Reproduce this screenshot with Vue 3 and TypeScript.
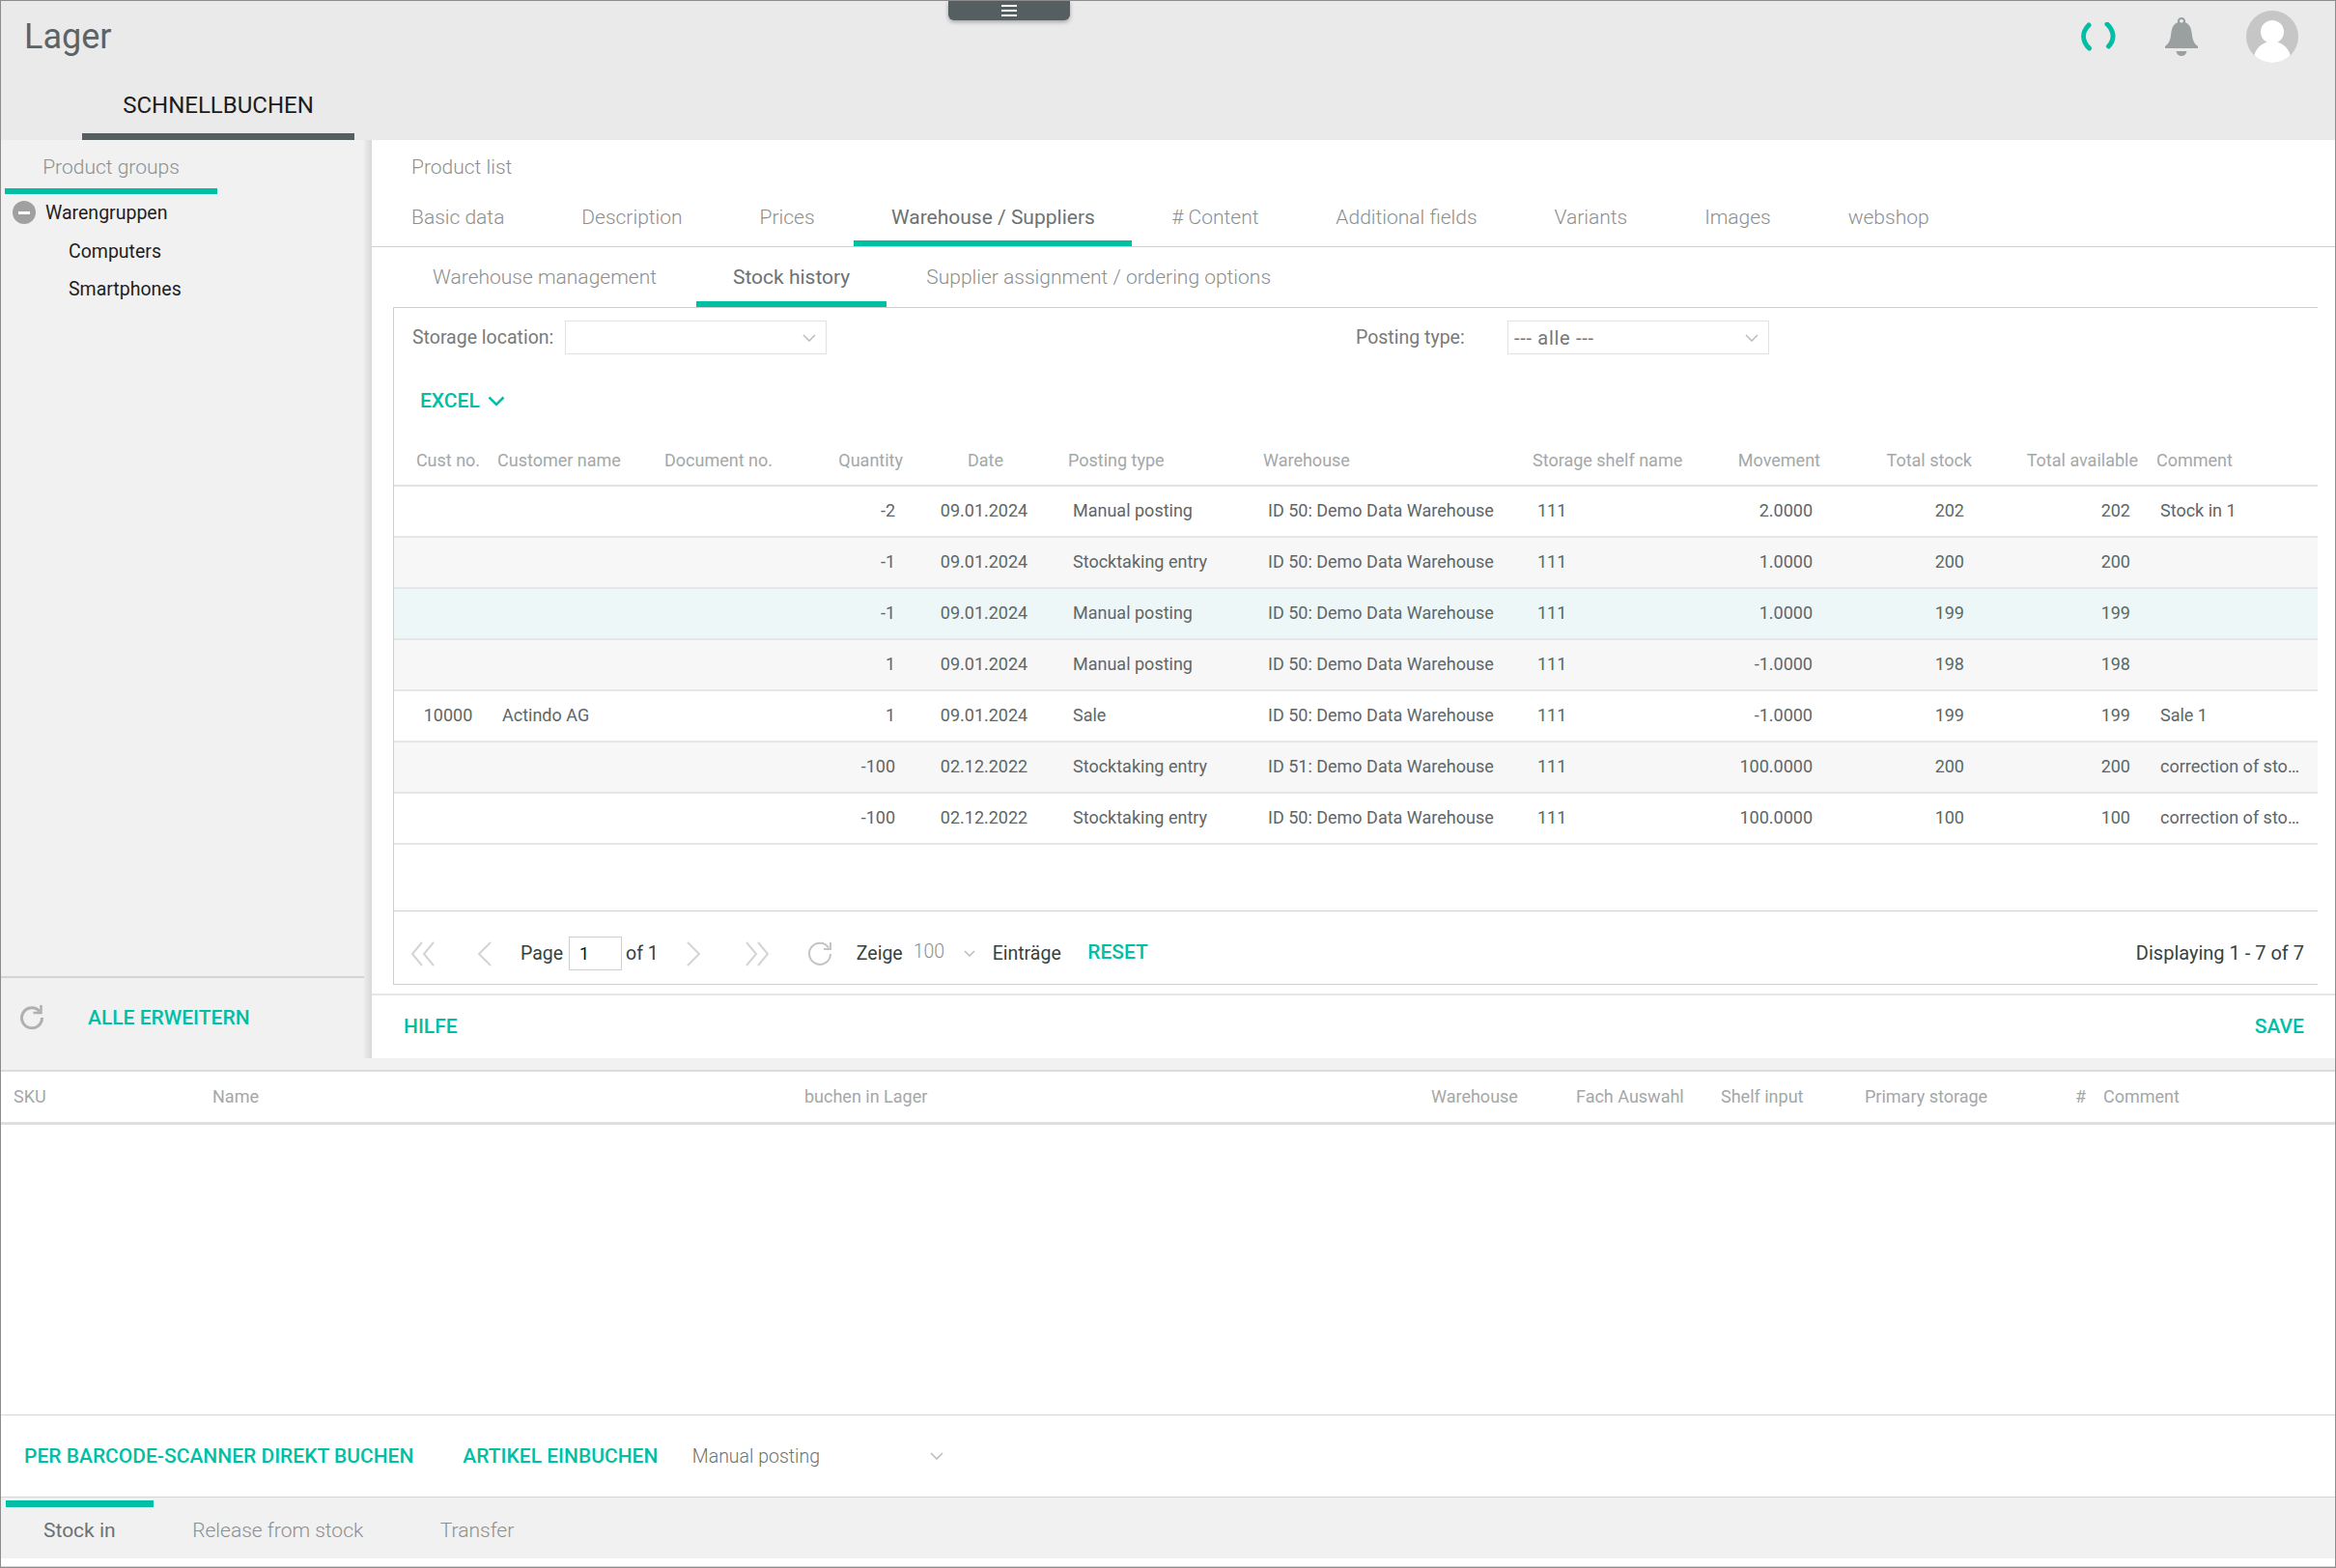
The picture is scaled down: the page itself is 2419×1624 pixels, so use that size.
<template>
  <div class="frame">
    <header class="top">
      <div class="handle">
        <span></span><span></span><span></span>
      </div>
      <div class="top-row">
        <h1 class="title">Lager</h1>
        <div class="top-icons">
          <svg class="spinner" width="36" height="30" viewBox="0 0 36 30">
            <path d="M8 3 C1 10 0.5 19 8.500 27" fill="none" stroke="#00bfa5" stroke-width="5" stroke-linecap="round" />
            <path d="M27 2 C34.500 9 35 18 28.500 25" fill="none" stroke="#00bfa5" stroke-width="5" stroke-linecap="round" />
          </svg>
          <svg class="bell" width="36" height="42" viewBox="0 0 36 42">
            <path fill="#9aa0a0" fill-rule="evenodd" d="M18 1c-2.300 0-4 1.700-4 3.800v1.500C9.500 8.200 8 12 7.300 17.500 6.500 24 5.500 28 1 31v2h34v-2c-4.500-3-5.500-7-6.300-13.500C28 12 26.500 8.200 22 6.300V4.800C22 2.700 20.300 1 18 1zm0 2c1.100 0 2 .8 2 1.800s-.9 1.800-2 1.800-2-.8-2-1.800.9-1.800 2-1.800z" />
            <path fill="#9aa0a0" d="M12.500 36h11c-.4 3-2.800 5-5.500 5s-5.100-2-5.500-5z" />
          </svg>
          <svg class="avatar" width="54" height="54" viewBox="0 0 54 54">
            <defs>
              <clipPath id="avatar-clip"><circle cx="27" cy="27" r="27" /></clipPath>
            </defs>
            <circle cx="27" cy="27" r="27" fill="#c6c6c6" />
            <g clip-path="url(#avatar-clip)" fill="#fff">
              <circle cx="27" cy="22" r="12" />
              <ellipse cx="27" cy="50" rx="19" ry="18" />
            </g>
          </svg>
        </div>
      </div>
      <nav class="top-tabs">
        <a class="top-tab">SCHNELLBUCHEN</a>
      </nav>
    </header>

    <section class="main">
      <aside class="side">
        <div class="side-tab">Product groups</div>
        <ul class="tree">
          <li class="tree-root">
            <span class="tree-toggle"></span>
            Warengruppen
          </li>
          <li class="tree-leaf">Computers</li>
          <li class="tree-leaf">Smartphones</li>
        </ul>
        <div class="side-foot">
          <svg width="28" height="28" viewBox="0 0 28 28" fill="none" stroke="#b0b0b0" stroke-width="3">
            <path d="M22 7.500A10.500 10.500 0 1 0 24.500 14" />
            <path d="M23.500 1v8h-8" stroke-width="2.500" />
          </svg>
          <a class="link expand">ALLE ERWEITERN</a>
        </div>
      </aside>
      <div class="splitter"></div>

      <div class="content">
        <div class="crumb">Product list</div>
        <nav class="tabs">
          <a v-for="t in mainTabs" :key="t" class="tab" :class="{ active: t === 'Warehouse / Suppliers' }">{{ t }}</a>
        </nav>
        <nav class="subtabs">
          <a v-for="t in subTabs" :key="t" class="subtab" :class="{ active: t === 'Stock history' }">{{ t }}</a>
        </nav>

        <div class="box">
          <div class="filters">
            <label class="f-label first">Storage location:</label>
            <div class="select s1">
              <svg class="chev" width="14" height="8" viewBox="0 0 14 8"><path d="M1 1l6 6 6-6" fill="none" stroke="#bbb" stroke-width="1.500" /></svg>
            </div>
            <label class="f-label second">Posting type:</label>
            <div class="select s2">
              <span>--- alle ---</span>
              <svg class="chev" width="14" height="8" viewBox="0 0 14 8"><path d="M1 1l6 6 6-6" fill="none" stroke="#bbb" stroke-width="1.500" /></svg>
            </div>
          </div>
          <div class="excel">
            <a class="link">EXCEL</a>
            <svg width="18" height="11" viewBox="0 0 18 11"><path d="M1.500 1.500L9 9l7.500-7.500" fill="none" stroke="#00bfa5" stroke-width="2.500" /></svg>
          </div>

          <table class="grid">
            <colgroup>
              <col v-for="w in colWidths" :key="w.id" :style="{ width: w.px + 'px' }" />
            </colgroup>
            <thead>
              <tr>
                <th v-for="c in columns" :key="c.label" :class="c.cls">{{ c.label }}</th>
              </tr>
            </thead>
            <tbody>
              <tr v-for="(r, i) in rows" :key="i" :class="{ alt: i % 2 === 1 && i !== 2, hover: i === 2 }">
                <td v-for="(v, j) in r" :key="j" :class="columns[j].cls">{{ v }}</td>
              </tr>
            </tbody>
          </table>

          <div class="pager">
            <svg class="p-first" width="26" height="26" viewBox="0 0 26 26" fill="none" stroke="#d4d4d4" stroke-width="2"><path d="M12 1L2 13l10 12M24 1L14 13l10 12" /></svg>
            <svg class="p-prev" width="16" height="26" viewBox="0 0 16 26" fill="none" stroke="#d4d4d4" stroke-width="2"><path d="M14 1L2 13l12 12" /></svg>
            <span class="p-text p-page">Page</span>
            <input class="p-input" value="1" />
            <span class="p-text p-of">of 1</span>
            <svg class="p-next" width="16" height="26" viewBox="0 0 16 26" fill="none" stroke="#d4d4d4" stroke-width="2"><path d="M2 1l12 12L2 25" /></svg>
            <svg class="p-last" width="26" height="26" viewBox="0 0 26 26" fill="none" stroke="#d4d4d4" stroke-width="2"><path d="M2 1l10 12L2 25M14 1l10 12-10 12" /></svg>
            <svg class="p-refresh" width="28" height="28" viewBox="0 0 28 28" fill="none" stroke="#c4c4c4" stroke-width="2">
              <path d="M23 7.500A11 11 0 1 0 25 14" />
              <path d="M25 2v7h-7" />
            </svg>
            <span class="p-text p-zeige">Zeige</span>
            <span class="p-size">100</span>
            <svg class="p-chev" width="12" height="8" viewBox="0 0 12 8"><path d="M1 1l5 5 5-5" fill="none" stroke="#bbb" stroke-width="1.500" /></svg>
            <span class="p-text p-entries">Einträge</span>
            <a class="link p-reset">RESET</a>
            <span class="p-text p-display">Displaying 1 - 7 of 7</span>
          </div>
        </div>

        <div class="foot">
          <a class="link">HILFE</a>
          <a class="link">SAVE</a>
        </div>
      </div>
    </section>

    <section class="lower">
      <div class="band"></div>
      <div class="lower-head">
        <span v-for="h in lowerCols" :key="h.label" class="lh" :style="{ width: h.px + 'px' }">{{ h.label }}</span>
      </div>
      <div class="lower-body"></div>
      <div class="actions">
        <a class="link barcode">PER BARCODE-SCANNER DIREKT BUCHEN</a>
        <a class="link book">ARTIKEL EINBUCHEN</a>
        <span class="a-type">Manual posting</span>
        <svg width="14" height="8" viewBox="0 0 14 8"><path d="M1 1l6 6 6-6" fill="none" stroke="#bbb" stroke-width="1.500" /></svg>
      </div>
      <nav class="bottom-tabs">
        <a v-for="t in bottomTabs" :key="t" class="b-tab" :class="{ active: t === 'Stock in' }">{{ t }}</a>
      </nav>
    </section>
  </div>
</template>

<script setup lang="ts">
const mainTabs = ['Basic data', 'Description', 'Prices', 'Warehouse / Suppliers', '# Content', 'Additional fields', 'Variants', 'Images', 'webshop']
const subTabs = ['Warehouse management', 'Stock history', 'Supplier assignment / ordering options']
const bottomTabs = ['Stock in', 'Release from stock', 'Transfer']

const columns = [
  { label: 'Cust no.', cls: 'c-cust' },
  { label: 'Customer name', cls: 'c-left' },
  { label: 'Document no.', cls: 'c-left' },
  { label: 'Quantity', cls: 'c-right' },
  { label: 'Date', cls: 'c-center' },
  { label: 'Posting type', cls: 'c-left' },
  { label: 'Warehouse', cls: 'c-left' },
  { label: 'Storage shelf name', cls: 'c-left' },
  { label: 'Movement', cls: 'c-right' },
  { label: 'Total stock', cls: 'c-right' },
  { label: 'Total available', cls: 'c-right' },
  { label: 'Comment', cls: 'c-comment' },
]

const colWidths = [102, 173, 152, 105, 161, 202, 279, 188, 120, 157, 172, 181].map((px, id) => ({ id, px }))

const wh50 = 'ID 50: Demo Data Warehouse'
const wh51 = 'ID 51: Demo Data Warehouse'
const fix = 'correction of sto…'
const rows = [
  ['', '', '', '-2', '09.01.2024', 'Manual posting', wh50, '111', '2.0000', '202', '202', 'Stock in 1'],
  ['', '', '', '-1', '09.01.2024', 'Stocktaking entry', wh50, '111', '1.0000', '200', '200', ''],
  ['', '', '', '-1', '09.01.2024', 'Manual posting', wh50, '111', '1.0000', '199', '199', ''],
  ['', '', '', '1', '09.01.2024', 'Manual posting', wh50, '111', '-1.0000', '198', '198', ''],
  ['10000', 'Actindo AG', '', '1', '09.01.2024', 'Sale', wh50, '111', '-1.0000', '199', '199', 'Sale 1'],
  ['', '', '', '-100', '02.12.2022', 'Stocktaking entry', wh51, '111', '100.0000', '200', '200', fix],
  ['', '', '', '-100', '02.12.2022', 'Stocktaking entry', wh50, '111', '100.0000', '100', '100', fix],
]

const lowerCols = [
  { label: 'SKU', px: 206 },
  { label: 'Name', px: 613 },
  { label: 'buchen in Lager', px: 649 },
  { label: 'Warehouse', px: 150 },
  { label: 'Fach Auswahl', px: 150 },
  { label: 'Shelf input', px: 149 },
  { label: 'Primary storage', px: 218 },
  { label: '#', px: 29 },
  { label: 'Comment', px: 180 },
]
</script>

<style>
html, body {
  margin: 0;
  padding: 0;
  background: #fff;
}
</style>

<style scoped>
.frame {
  width: 2419px;
  height: 1624px;
  box-sizing: border-box;
  border: 1px solid #8c8c8c;
  display: flex;
  flex-direction: column;
  position: relative;
  overflow: hidden;
  background: #fff;
  font-family: Roboto, "Liberation Sans", sans-serif;
  font-size: 18px;
  color: #5e6668;
}
a { cursor: pointer; }

.top {
  height: 144px;
  background: #eaeaea;
  display: flex;
  flex-direction: column;
  flex: none;
}
.handle {
  position: absolute;
  left: 981px;
  top: 0;
  width: 126px;
  height: 20px;
  box-sizing: border-box;
  padding-top: 4px;
  background: #555e60;
  border-radius: 0 0 6px 6px;
  box-shadow: 0 2px 4px rgba(0, 0, 0, 0.3);
  display: flex;
  flex-direction: column;
  align-items: center;
  gap: 3px;
}
.handle span {
  width: 16px;
  height: 2px;
  background: #fff;
}
.top-row {
  height: 77px;
  flex: none;
  display: flex;
  align-items: center;
  justify-content: space-between;
  padding: 0 25px 0 24px;
}
.title {
  margin: 0 0 3px;
  font-size: 36px;
  font-weight: 400;
  color: #5a6468;
  line-height: 72px;
}
.top-icons {
  display: flex;
  align-items: center;
  margin-top: -3px;
  margin-right: 13px;
}
.spinner { margin-right: 50px; }
.bell { margin-right: 49.5px; }
.top-tabs {
  padding-left: 84px;
  display: flex;
}
.top-tab {
  width: 282px;
  height: 67px;
  box-sizing: border-box;
  line-height: 62px;
  text-align: center;
  border-bottom: 7px solid #555e60;
  color: #1c1c1c;
  font-size: 24px;
}

.main {
  height: 951px;
  flex: none;
  display: flex;
}
.side {
  width: 376px;
  flex: none;
  background: #f1f1f1;
  display: flex;
  flex-direction: column;
}
.splitter {
  width: 8px;
  flex: none;
  background: linear-gradient(to right, #ececec, #d8d8d8);
}
.side-tab {
  margin: 0 0 0 4px;
  width: 220px;
  height: 56px;
  box-sizing: border-box;
  line-height: 56px;
  border-bottom: 6px solid #00bfa5;
  text-align: center;
  color: #8c8f90;
  font-size: 21px;
  font-weight: 300;
}
.tree {
  list-style: none;
  margin: 0;
  padding: 0;
  flex: 1;
  color: #1f1f1f;
}
.tree-root {
  display: flex;
  align-items: center;
  height: 38px;
  margin-bottom: 2px;
  padding-left: 12px;
  font-size: 19.5px;
}
.tree-toggle {
  width: 24px;
  height: 24px;
  border-radius: 50%;
  background: #a0a0a0;
  margin-right: 10px;
  display: flex;
  align-items: center;
  justify-content: center;
}
.tree-toggle::before {
  content: "";
  width: 12px;
  height: 3px;
  background: #fff;
}
.tree-leaf {
  height: 39px;
  line-height: 39px;
  padding-left: 70px;
  font-size: 19.5px;
}
.side-foot {
  height: 85px;
  border-top: 2px solid #d4d4d4;
  display: flex;
  align-items: center;
  padding: 0 0 2px 18px;
  box-sizing: border-box;
}
.link {
  color: #00bfa5;
  font-weight: 500;
  font-size: 21px;
}
.expand { margin-left: 44px; }

.content {
  flex: 1;
  min-width: 0;
  display: flex;
  flex-direction: column;
  background: #fff;
}
.crumb {
  height: 56px;
  line-height: 56px;
  padding-left: 41px;
  font-size: 21px;
  font-weight: 300;
  color: #8c8f90;
}
.tabs {
  height: 54px;
  display: flex;
  padding-left: 2px;
  border-bottom: 1px solid #cfcfcf;
  flex: none;
}
.tab {
  padding: 0 39px;
  margin-right: 1.9px;
  line-height: 48px;
  height: 54px;
  box-sizing: border-box;
  font-size: 21px;
  font-weight: 300;
  color: #8c8f90;
}
.tab.active {
  padding: 0 38.5px;
  border-bottom: 6px solid #00bfa5;
  font-weight: 400;
  color: #6c7274;
}
.subtabs {
  height: 62px;
  display: flex;
  gap: 3px;
  padding-left: 25px;
  flex: none;
}
.subtab {
  padding: 0 38px;
  height: 62px;
  line-height: 63px;
  box-sizing: border-box;
  font-size: 21px;
  font-weight: 300;
  color: #8c8f90;
}
.subtab.active {
  border-bottom: 6px solid #00bfa5;
  font-weight: 400;
  color: #6c7274;
}
.box {
  margin: 0 18px 0 22px;
  height: 702px;
  box-sizing: border-box;
  border: 1px solid #cfcfcf;
  border-right: 0;
  display: flex;
  flex-direction: column;
  flex: none;
}
.filters {
  display: flex;
  align-items: center;
  height: 35px;
  margin-top: 13px;
  flex: none;
}
.f-label {
  font-size: 19.5px;
  font-weight: 400;
  color: #7a7a7a;
}
.f-label.first { margin-left: 19px; width: 158px; }
.f-label.second { margin-left: 548px; width: 157px; }
.select {
  height: 35px;
  box-sizing: border-box;
  border: 1px solid #e2e2e2;
  width: 271px;
  display: flex;
  align-items: center;
  justify-content: flex-end;
  padding: 0 10px 0 6px;
  font-size: 20px;
  font-weight: 400;
}
.select span {
  flex: 1;
  color: #777;
  font-kerning: none;
  letter-spacing: 0.7px;
}
.excel {
  height: 70px;
  padding: 0 0 0 27px;
  margin-top: 13px;
  display: flex;
  align-items: center;
  gap: 8px;
  flex: none;
}
.grid {
  table-layout: fixed;
  border-collapse: collapse;
  width: 1992px;
  flex: none;
}
.grid th {
  height: 53px;
  padding: 0 5px;
  font-size: 18px;
  font-weight: 400;
  color: #a3a8a9;
  border-bottom: 2px solid #e2e2e2;
  box-sizing: border-box;
  white-space: nowrap;
}
.grid td {
  height: 53px;
  padding: 0 13px 2px 10px;
  box-sizing: border-box;
  border-bottom: 2px solid #e6e6e6;
  font-size: 18px;
  white-space: nowrap;
}
.grid tr.alt td { background: #f7f7f7; }
.grid tr.hover td { background: #edf7f8; }
.c-left { text-align: left; }
.c-right { text-align: right; }
.c-center { text-align: center; }
.grid .c-cust { text-align: center; padding-left: 10px; padding-right: 0; }
.grid th.c-comment { text-align: left; padding-left: 14px; }
.grid td.c-comment { text-align: left; padding-left: 18px; padding-right: 12px; }

.pager {
  margin-top: auto;
  height: 76px;
  padding-top: 12px;
  border-top: 1px solid #cfcfcf;
  display: flex;
  align-items: center;
  flex: none;
  box-sizing: border-box;
}
.p-text { color: #34433f; font-size: 19.5px; font-weight: 400; margin-top: -1px; }
.p-first { margin-left: 17px; }
.p-prev { margin-left: 43px; }
.p-page { margin-left: 29px; }
.p-input {
  width: 55px;
  height: 35px;
  box-sizing: border-box;
  border: 1px solid #cfcfcf;
  margin-left: 6px;
  padding: 0 0 0 10px;
  outline: none;
  font: 400 18px Roboto, sans-serif;
  color: #111;
}
.p-of { margin-left: 4px; }
.p-next { margin-left: 28px; }
.p-last { margin-left: 45px; }
.p-refresh { margin-left: 38.5px; }
.p-zeige { margin-left: 23.5px; }
.p-size { margin-left: 11px; font-size: 19.5px; font-weight: 300; color: #8c8f90; margin-top: -4px; }
.p-chev { margin-left: 19.5px; }
.p-entries { margin-left: 18px; }
.p-reset { margin-left: 27.5px; margin-top: -3px; }
.p-display { margin-left: auto; margin-right: 14px; font-size: 20px; }

.foot {
  margin-top: 9px;
  flex: 1;
  border-top: 2px solid #e6e6e6;
  display: flex;
  align-items: center;
  justify-content: space-between;
  padding: 0 32px 2px 33px;
}

.lower {
  flex: 1;
  min-height: 0;
  display: flex;
  flex-direction: column;
  border-bottom: 1px solid #d6d6d6;
}
.band {
  height: 12px;
  background: #f1f1f1;
  flex: none;
}
.lower-head {
  height: 57px;
  box-sizing: border-box;
  padding-bottom: 2px;
  border-top: 2px solid #dcdcdc;
  border-bottom: 3px solid #dfdfdf;
  display: flex;
  align-items: center;
  padding-left: 13px;
  flex: none;
}
.lh {
  flex: none;
  font-size: 18px;
  color: #a3a8a9;
}
.lower-body { flex: 1; }
.actions {
  height: 86px;
  box-sizing: border-box;
  border-top: 1px solid #d6d6d6;
  border-bottom: 1px solid #d6d6d6;
  display: flex;
  align-items: center;
  padding-left: 24px;
  flex: none;
}
.book { margin-left: 51px; }
.a-type {
  margin-left: 35.5px;
  width: 246.5px;
  font-size: 19.5px;
  font-weight: 300;
  color: #6c7274;
}
.bottom-tabs {
  height: 63px;
  box-sizing: border-box;
  padding: 3px 0 0 5px;
  margin-bottom: 8px;
  background: #f1f1f1;
  display: flex;
  gap: 1.5px;
  flex: none;
}
.b-tab {
  padding: 7px 39px 0;
  line-height: 48px;
  height: 55px;
  font-size: 21px;
  font-weight: 300;
  color: #8c8f90;
  box-sizing: border-box;
}
.b-tab.active {
  border-top: 7px solid #00bfa5;
  padding-top: 0;
  font-weight: 400;
  color: #6c7274;
}
</style>
